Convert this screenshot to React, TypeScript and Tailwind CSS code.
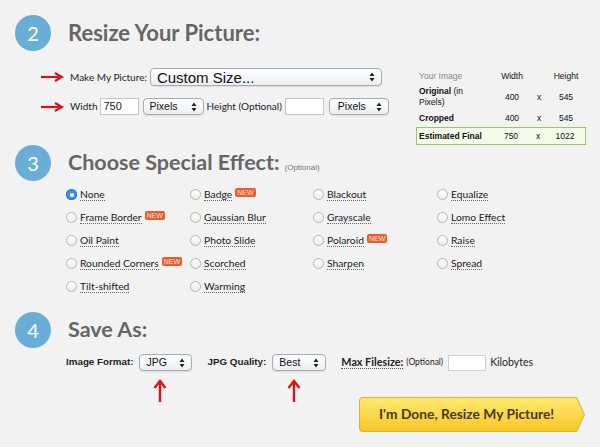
import React from "react";

function RightArrow() {
  return (
    <svg width="24" height="10" viewBox="0 0 24 10" className="shrink-0">
      <path d="M1 5 H21" stroke="#d8141b" strokeWidth="2.2" fill="none" />
      <path d="M15 1 L22 5 L15 9" stroke="#d8141b" strokeWidth="2.2" fill="none" />
    </svg>
  );
}

function UpArrow() {
  return (
    <svg width="14" height="24" viewBox="0 0 14 24" className="shrink-0">
      <path d="M7 23 V3" stroke="#d8141b" strokeWidth="2.4" fill="none" />
      <path d="M1.5 9 L7 2 L12.5 9" stroke="#d8141b" strokeWidth="2.4" fill="none" />
    </svg>
  );
}

function UpDown() {
  return (
    <svg width="6" height="10" viewBox="0 0 6 10" className="shrink-0">
      <path d="M0.5 4 L3 0.5 L5.5 4 Z" fill="#222" />
      <path d="M0.5 6 L3 9.5 L5.5 6 Z" fill="#222" />
    </svg>
  );
}

function Select({ cls, text, textCls }: { cls: string; text: string; textCls: string }) {
  return (
    <div
      className={
        "flex shrink-0 items-center justify-between rounded-[4px] border border-[#a6acb4] bg-gradient-to-b from-[#ffffff] to-[#eceef1] shadow-[0_1px_1px_rgba(0,0,0,0.08)] font-['Liberation_Sans',Arial,sans-serif] text-[#111] " +
        cls
      }
    >
      <span className={"whitespace-nowrap " + textCls}>{text}</span>
      <UpDown />
    </div>
  );
}

function NewBadge() {
  return (
    <span className="ml-[3px] mb-[4px] inline-flex h-[9px] items-center rounded-[2px] bg-[#ec5a2f] px-[2px] font-['Liberation_Sans',Arial,sans-serif] text-[7px] leading-none text-[#ffe9dd]">
      NEW
    </span>
  );
}

function Radio({ label, checked, isNew }: { label: string; checked?: boolean; isNew?: boolean }) {
  return (
    <div className="flex h-[23px] items-center">
      {checked ? (
        <span className="flex h-[11px] w-[11px] shrink-0 items-center justify-center rounded-full bg-[#3b8fe8] shadow-[inset_0_0_0_1px_#2f7cd0]">
          <span className="h-[4px] w-[4px] rounded-full bg-white" />
        </span>
      ) : (
        <span className="h-[11px] w-[11px] shrink-0 rounded-full border border-[#b4b4b4] bg-gradient-to-b from-[#ffffff] to-[#ececec]" />
      )}
      <span className="ml-[3px] whitespace-nowrap border-b border-dotted border-[#666] text-[10.3px] leading-[12px] text-[#1a1a1a]">
        {label}
      </span>
      {isNew && <NewBadge />}
    </div>
  );
}

function Circle({ n }: { n: string }) {
  return (
    <div className="flex h-[36px] w-[36px] shrink-0 items-center justify-center rounded-full bg-[#6aaed8] text-[20px] text-white">
      {n}
    </div>
  );
}

const effects: { label: string; checked?: boolean; isNew?: boolean }[] = [
  { label: "None", checked: true },
  { label: "Badge", isNew: true },
  { label: "Blackout" },
  { label: "Equalize" },
  { label: "Frame Border", isNew: true },
  { label: "Gaussian Blur" },
  { label: "Grayscale" },
  { label: "Lomo Effect" },
  { label: "Oil Paint" },
  { label: "Photo Slide" },
  { label: "Polaroid", isNew: true },
  { label: "Raise" },
  { label: "Rounded Corners", isNew: true },
  { label: "Scorched" },
  { label: "Sharpen" },
  { label: "Spread" },
  { label: "Tilt-shifted" },
  { label: "Warming" },
];

export default function App() {
  return (
    <div className="h-[447px] w-[600px] overflow-hidden bg-[#f2f2f2] font-['Lato',sans-serif] text-[#222]">
      {/* Section 2 */}
      <div className="flex items-center pl-[15px] pt-[15px]">
        <Circle n="2" />
        <h1 className="ml-[17px] whitespace-nowrap text-[22px] font-bold leading-none text-[#666]">Resize Your Picture:</h1>
      </div>
      <div className="mt-[17px] flex">
        <div className="w-[416px] shrink-0 pl-[40px]">
          <div className="flex h-[18px] items-center whitespace-nowrap">
            <RightArrow />
            <span className="ml-[6px] text-[10px] text-[#222]">Make My Picture:</span>
            <Select
              cls="ml-[3px] h-[18px] w-[232px] pl-[6px] pr-[6px]"
              text="Custom Size..."
              textCls="text-[15px] leading-none"
            />
          </div>
          <div className="mt-[12px] flex h-[17px] items-center whitespace-nowrap">
            <RightArrow />
            <span className="ml-[6px] text-[10px]">Width</span>
            <div className="ml-[2px] flex h-[17px] w-[39px] shrink-0 items-center border border-[#c4c4c4] bg-white pl-[3px] font-['Liberation_Sans',Arial,sans-serif] text-[11px]">
              750
            </div>
            <Select cls="ml-[4px] h-[17px] w-[61px] pl-[6px] pr-[6px]" text="Pixels" textCls="text-[10.5px]" />
            <span className="ml-[3px] text-[10px]">Height (Optional)</span>
            <div className="ml-[3px] h-[17px] w-[39px] shrink-0 border border-[#c4c4c4] bg-white" />
            <Select cls="ml-[5px] h-[17px] w-[60px] pl-[8px] pr-[6px]" text="Pixels" textCls="text-[10.5px]" />
          </div>
        </div>
        <div className="w-[170px] shrink-0 font-['Liberation_Sans',Arial,sans-serif] text-[8.5px] text-[#111]">
          <div className="grid h-[16px] grid-cols-[77px_32px_22px_32px] items-center pl-[3px]">
            <span className="text-[#888]">Your Image</span>
            <span className="text-center">Width</span>
            <span />
            <span className="text-center">Height</span>
          </div>
          <div className="grid h-[26px] grid-cols-[77px_32px_22px_32px] items-center pl-[3px]">
            <span className="leading-[11.5px]">
              <b>Original</b> (in
              <br />
              Pixels)
            </span>
            <span className="text-center">400</span>
            <span className="text-center">x</span>
            <span className="text-center">545</span>
          </div>
          <div className="grid h-[17px] grid-cols-[77px_32px_22px_32px] items-center pl-[3px]">
            <b>Cropped</b>
            <span className="text-center">400</span>
            <span className="text-center">x</span>
            <span className="text-center">545</span>
          </div>
          <div className="grid h-[18px] grid-cols-[76px_32px_22px_32px] items-center border border-[#9cc27a] bg-[#f4fbe8] pl-[2px]">
            <b>Estimated Final</b>
            <span className="text-center">750</span>
            <span className="text-center">x</span>
            <span className="text-center">1022</span>
          </div>
        </div>
      </div>

      {/* Section 3 */}
      <div className="flex items-center pl-[15px]">
        <Circle n="3" />
        <h2 className="ml-[17px] whitespace-nowrap text-[21.5px] font-bold leading-none text-[#666]">Choose Special Effect:</h2>
        <span className="ml-[5px] mt-[10px] font-['Liberation_Sans',Arial,sans-serif] text-[8px] text-[#777]">
          (Optional)
        </span>
      </div>
      <div className="mt-[2px] grid grid-cols-[124px_123px_124px_124px] pl-[66px]">
        {effects.map((e) => (
          <Radio key={e.label} label={e.label} checked={e.checked} isNew={e.isNew} />
        ))}
      </div>

      {/* Section 4 */}
      <div className="mt-[14px] flex items-center pl-[15px]">
        <Circle n="4" />
        <h2 className="ml-[17px] whitespace-nowrap text-[21.5px] font-bold leading-none text-[#666]">Save As:</h2>
      </div>
      <div className="mt-[6px] flex h-[17px] items-center whitespace-nowrap pl-[66px]">
        <span className="font-['Liberation_Sans',Arial,sans-serif] text-[9.8px] font-bold">Image Format:</span>
        <Select cls="ml-[5px] h-[17px] w-[53px] pl-[7px] pr-[6px]" text="JPG" textCls="text-[10.5px]" />
        <span className="ml-[16px] font-['Liberation_Sans',Arial,sans-serif] text-[9.8px] font-bold">JPG Quality:</span>
        <Select cls="ml-[6px] h-[17px] w-[54px] pl-[6px] pr-[6px]" text="Best" textCls="text-[10.5px]" />
        <span className="ml-[15px] border-b border-dotted border-[#555] text-[10.8px] font-bold leading-[12px]">
          Max Filesize:
        </span>
        <span className="ml-[3px] text-[8.5px]">(Optional)</span>
        <div className="ml-[5px] h-[16px] w-[38px] shrink-0 border border-[#d0d0d0] bg-white" />
        <span className="ml-[4px] text-[10.5px]">Kilobytes</span>
      </div>
      <div className="mt-[8px] flex items-start">
        <div className="ml-[153px]">
          <UpArrow />
        </div>
        <div className="ml-[120px]">
          <UpArrow />
        </div>
        <div className="ml-[58px] mt-[18px] h-[35px] w-[226px] shrink-0 rounded-l-[4px] bg-[#e0b43a] p-[1px] [clip-path:polygon(0_0,calc(100%_-_8px)_0,100%_50%,calc(100%_-_8px)_100%,0_100%)]">
          <div className="flex h-full w-full items-center rounded-l-[3px] bg-gradient-to-b from-[#ffe96e] to-[#f6c722] pl-[19px] [clip-path:polygon(0_0,calc(100%_-_8px)_0,100%_50%,calc(100%_-_8px)_100%,0_100%)]">
            <span className="whitespace-nowrap text-[13.8px] font-bold text-[#4a3808]">I'm Done, Resize My Picture!</span>
          </div>
        </div>
      </div>
    </div>
  );
}
